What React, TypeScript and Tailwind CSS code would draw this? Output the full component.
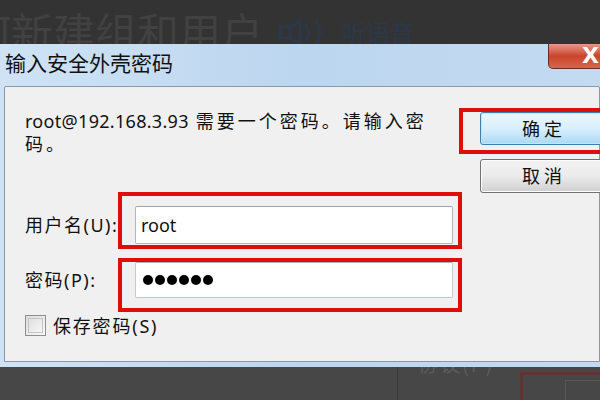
const cjk = "font-['Noto_Sans','Noto_Sans_CJK_SC',sans-serif]";

function Speaker() {
  return (
    <svg width="48" height="26" viewBox="0 0 48 26" fill="none" stroke="#2a384a" strokeWidth="3">
      <rect x="2" y="8" width="10" height="11" />
      <path d="M12 8 L22 2 V25 L12 19" strokeLinejoin="round" />
      <path d="M28 6 Q33 13 28 21" strokeLinecap="round" />
      <path d="M38 2 Q46 13 38 25" strokeLinecap="round" />
    </svg>
  );
}

export default function App() {
  return (
    <div className={`relative w-[600px] h-[400px] overflow-hidden bg-[#333333] ${cjk}`}>
      {/* page header behind the dialog */}
      <div className="h-[44px] flex items-start overflow-hidden whitespace-nowrap">
        <span className="ml-[-31px] mt-[10px] text-[42px] leading-none text-[#414141] font-['Noto_Sans_CJK_SC',sans-serif]">
          何新建组和用户
        </span>
        <span className="ml-[15px] mt-[19px]">
          <Speaker />
        </span>
        <span className="ml-[16px] mt-[20px] text-[24px] leading-none text-[#2a384a] font-['Noto_Sans_CJK_SC',sans-serif]">
          听语音
        </span>
      </div>

      {/* dialog window */}
      <div className="h-[323px] flex flex-col bg-gradient-to-r from-[#cfe3f5] via-[#bcd6ef] to-[#c3dbf1]">
        {/* title bar */}
        <div className="relative h-[42px] flex items-center pl-[5px] pb-[5px]">
          <span className="text-[21px] leading-none text-[#111] font-['Noto_Sans_CJK_SC',sans-serif]">
            输入安全外壳密码
          </span>
          <div className="absolute left-[548px] top-0 w-[90px] h-[25px] rounded-bl-[5px] border border-t-0 border-[#6e2a20] bg-gradient-to-b from-[#e7988a] via-[#c9432c] to-[#d8664c] flex items-center">
            <span className="ml-[33px] text-[22px] font-bold leading-none text-white font-['DejaVu_Sans',sans-serif]">X</span>
          </div>
        </div>

        {/* content */}
        <div className="flex-1 ml-[4px] mb-[5px] border border-[#8898a8] rounded-t-[2px] bg-[#f0f0f0] flex pl-[20px] text-[#111]">
          <div className="w-[428px] flex flex-col">
            <p className="mt-[22px] text-[18px] leading-[22px] font-['Noto_Sans_CJK_SC',sans-serif] whitespace-nowrap">
              <span className="font-['Noto_Sans',sans-serif] tracking-[0.3px]">root@192.168.3.93</span>
              <span className="tracking-[3px]"> 需要一个密码。请输入密</span>
              <br />
              <span className="tracking-[3px]">码。</span>
            </p>

            <div className="mt-[52px] flex items-center">
              <span className="w-[110px] text-[18px] leading-none tracking-[1.5px]">用户名(U):</span>
              <div className="w-[318px] h-[38px] bg-white border border-[#abb7c4] border-t-[#9aa5b2] rounded-[2px] flex items-center pl-[5px]">
                <span className="text-[18px] leading-none font-['Noto_Sans',sans-serif] text-[#111]">root</span>
              </div>
            </div>

            <div className="mt-[18px] flex items-center">
              <span className="w-[110px] text-[18px] leading-none tracking-[1.5px]">密码(P):</span>
              <div className="w-[318px] h-[36px] bg-white border border-[#bccbd8] border-t-[#a6b4c2] rounded-[2px] flex items-center pl-[7px] gap-[2.5px]">
                {[0, 1, 2, 3, 4, 5].map((i) => (
                  <span key={i} className="w-[9.5px] h-[9.5px] rounded-full bg-black" />
                ))}
              </div>
            </div>

            <div className="mt-[17px] flex items-center">
              <span className="w-[21px] h-[21px] border border-[#8e8f8f] bg-gradient-to-br from-[#dcdcdc] to-[#fafafa] p-[2px]">
                <span className="block w-full h-full border border-[#c4c4c4] bg-gradient-to-br from-[#e0e0e0] to-[#f6f6f6]" />
              </span>
              <span className="ml-[7px] text-[18px] leading-none tracking-[1.8px]">保存密码(S)</span>
            </div>
          </div>

          <div className="ml-[27px] mt-[25px] flex flex-col gap-[14px]">
            <button className="w-[124px] h-[33px] rounded-[3px] border border-[#3c7fb1] bg-gradient-to-b from-[#eaf6fd] via-[#d9f0fc] to-[#a7d9f5] shadow-[inset_0_0_0_1px_#c5e6f7] text-[18px] leading-none tracking-[4px] text-[#111] pl-[4px]">
              确定
            </button>
            <button className="w-[124px] h-[34px] rounded-[3px] border border-[#707070] bg-gradient-to-b from-[#f2f2f2] via-[#ebebeb] to-[#d0d0d0] shadow-[inset_0_0_0_1px_#fcfcfc] text-[18px] leading-none tracking-[4px] text-[#111] pl-[4px]">
              取消
            </button>
          </div>
        </div>
      </div>

      {/* page content below the dialog */}
      <div className="h-[33px] bg-[#474747] flex overflow-hidden">
        <div className="w-[398px] border-r border-[#3a3a3a]" />
        <span className="ml-[20px] mt-[-13px] text-[20px] leading-none tracking-[2px] text-[#5c5c5c] font-['Noto_Sans_CJK_SC',sans-serif]">协议(P)</span>
        <div className="ml-auto mt-[5px] w-[80px] border-[3px] border-r-0 border-b-0 border-[#5e3434] pl-[42px] pt-[5px]">
          <div className="h-full border border-r-0 border-b-0 border-[#585858]" />
        </div>
      </div>

      {/* red annotation boxes */}
      <div className="absolute left-[459px] top-[108px] w-[160px] h-[46px] border-[4px] border-[#e00d0d]" />
      <div className="absolute left-[118px] top-[192px] w-[344px] h-[57px] border-[4px] border-[#e00d0d]" />
      <div className="absolute left-[118px] top-[258px] w-[344px] h-[54px] border-[4px] border-[#e00d0d]" />
    </div>
  );
}
